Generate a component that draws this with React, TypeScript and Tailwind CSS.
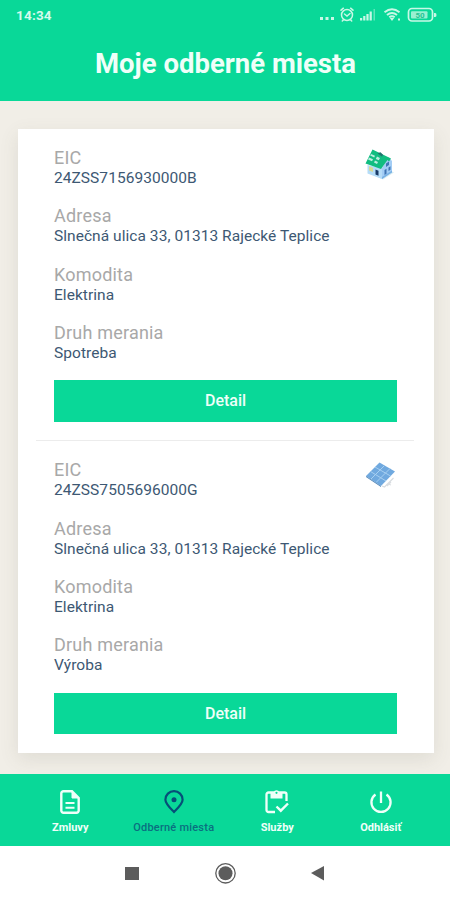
import React from 'react';

const GREEN = 'bg-[#09d898]';

function StatusIcons() {
  return (
    <svg width="120" height="18" viewBox="0 0 120 18" fill="none" className="text-[#c9f8e6]">
      <g fill="currentColor">
        <rect x="0" y="12" width="3" height="3" />
        <rect x="5.500" y="12" width="3" height="3" />
        <rect x="11" y="12" width="3" height="3" />
      </g>
      <g stroke="currentColor" strokeWidth="1.500" strokeLinecap="round">
        <circle cx="27" cy="10" r="5.500" />
        <path d="M21 5.200l2.400-2M33 5.200l-2.400-2M24.500 9l2.500 2 3-2.500M23.300 15l-1 1M30.700 15l1 1" />
      </g>
      <g fill="currentColor">
        <rect x="40" y="13" width="2.200" height="2.500" />
        <rect x="43.200" y="11" width="2.200" height="4.500" />
        <rect x="46.400" y="9" width="2.200" height="6.500" />
        <rect x="49.600" y="6.500" width="2.200" height="9" />
        <rect x="53.500" y="4" width="1.500" height="11.500" opacity=".45" />
      </g>
      <g stroke="currentColor" strokeWidth="2">
        <path d="M64.500 7.300c4.800-3.800 10.200-3.800 15 0M67 10c3.200-2.500 6.800-2.500 10 0M69.300 12.300c1.700-1.300 3.700-1.300 5.400 0" />
      </g>
      <path d="M69.800 13h4.400L72 16zM78 13.500h2v2h-2z" fill="currentColor" />
      <rect x="88.500" y="3.500" width="24" height="12.500" rx="3.500" stroke="currentColor" strokeWidth="1.700" />
      <rect x="91" y="6.200" width="16.500" height="7.200" rx="1" fill="currentColor" opacity=".75" />
      <path d="M114 8h1.200q1.300 0 1.300 2t-1.300 2H114z" fill="currentColor" />
      <text x="100" y="12.800" fontSize="8" fontWeight="700" textAnchor="middle" fill="#24c393">50</text>
    </svg>
  );
}

function HouseIcon() {
  return (
    <svg width="32" height="34" viewBox="0 0 32 34">
      <path d="M4 25l15 6.500 11-7-4-2z" fill="#d9edf2" />
      <path d="M3.500 17v8.500L18 31V20z" fill="#b5dcf8" />
      <path d="M18 20l6.500-11 3.500 4v11l-10 7z" fill="#a3cdf5" />
      <path d="M18 29v2l10-6.500v-2z" fill="#79b1e4" />
      <path d="M1.500 15.500L8.500 1.500l18.500 9-2 3-1.500-1.500L17 21z" fill="#11bd80" />
      <path d="M5 9.500l4 1.800-1 2-4-1.800zM11 12.500l3 1.400-1 2-3-1.400zM7 6l4 1.800-.8 1.600-4-1.800zM13 8.500l3 1.400-1.200 2.400-3-1.400z" fill="#bceee0" />
      <path d="M13.500 5.200l3-1 2.500 2.500-1 2z" fill="#21746e" />
      <path d="M5 18.200l4 1.600v4.200l-4-1.500z" fill="#d8da94" />
      <path d="M11.500 21.500l3 1.200v5l-3-1.200z" fill="#193966" />
      <path d="M22 15.500l3-2v3.500l-3 2zM20.500 22l2-1.300v5l-2 1.300zM24.500 19.500l2-1.300v3.500l-2 1.300z" fill="#3f74b3" />
    </svg>
  );
}

function SolarIcon() {
  return (
    <svg width="32" height="28" viewBox="0 0 32 28">
      <path d="M17 25l2.500 1 9-9M22 25l4-4m-3 2l3 1" stroke="#d9dde1" strokeWidth="1.200" fill="none" />
      <path d="M1 15L14.500 1.500 30 10.500 16 25z" fill="#70a9df" />
      <path d="M5.500 10.500L21 20M10 6l15.500 9M6 18L19.500 4.500M11 21.500L25 7.500" stroke="#a6cff1" strokeWidth="1" />
      <path d="M1 15v1l15 10v-1z" fill="#4c82b7" />
    </svg>
  );
}

function DocumentIcon() {
  return (
    <svg width="20" height="24" viewBox="0 0 20 24" fill="none" stroke="currentColor">
      <path d="M12 1.300H3.500A2.200 2.200 0 0 0 1.300 3.500v17a2.200 2.200 0 0 0 2.200 2.200h13a2.200 2.200 0 0 0 2.200-2.200V8z" strokeWidth="2.400" />
      <path d="M12 1v7h7z" fill="currentColor" strokeWidth="1" />
      <path d="M5.500 13h9M5.500 17.700h9" strokeWidth="2.100" />
    </svg>
  );
}

function PinIcon() {
  return (
    <svg width="20" height="24" viewBox="0 0 20 24" fill="none">
      <path d="M10 22C5 16.800 1.400 13.500 1.400 9.700a8.600 8.600 0 0 1 17.200 0C18.600 13.500 15 16.800 10 22z" stroke="currentColor" strokeWidth="2.200" />
      <circle cx="10" cy="9.700" r="2.500" fill="currentColor" />
    </svg>
  );
}

function ClipboardIcon() {
  return (
    <svg width="24" height="24" viewBox="0 0 24 24" fill="none" stroke="currentColor" className="overflow-visible">
      <path d="M10 22H3.500a2 2 0 0 1-2-2V4.500a2 2 0 0 1 2-2h16a2 2 0 0 1 2 2V11" strokeWidth="2.300" />
      <path d="M5.500 2.500h3.200a2.900 2.900 0 0 1 5.600 0h3.200v6h-12z" fill="currentColor" stroke="none" />
      <circle cx="11.500" cy="2.800" r="1.100" fill="#09d898" stroke="none" />
      <path d="M11.500 16.500l4.300 4.200 7.200-7.200" strokeWidth="2.400" />
    </svg>
  );
}

function PowerIcon() {
  return (
    <svg width="24" height="24" viewBox="0 0 24 24" fill="none" stroke="currentColor" strokeWidth="2.300">
      <path d="M12 1.500v11.500M6.500 4.500a9.600 9.600 0 1 0 11 0" />
    </svg>
  );
}

function Field({ label, value }: { label: string; value: string }) {
  return (
    <div className="h-[58.400px]">
      <div className="text-[18px] leading-[20px] tracking-[0.200px] text-[#a8a8a8]">{label}</div>
      <div className="whitespace-nowrap text-[15.500px] leading-[20px] tracking-[0.050px] text-[#3d5873]">{value}</div>
    </div>
  );
}

function SupplyPoint({ eic, kind, icon }: { eic: string; kind: string; icon: React.ReactNode }) {
  return (
    <section className="flex h-[312.400px] flex-col pt-[18.900px] pr-[37px] pl-[36px]">
      <div className="flex items-start justify-between">
        <Field label="EIC" value={eic} />
        {icon}
      </div>
      <Field label="Adresa" value="Slnečná ulica 33, 01313 Rajecké Teplice" />
      <Field label="Komodita" value="Elektrina" />
      <Field label="Druh merania" value={kind} />
      <button className={`-mt-[1.200px] h-[41.400px] w-full shrink-0 text-[16px] font-medium leading-[42px] text-[#effff9] ${GREEN}`}>Detail</button>
    </section>
  );
}

function NavItem({ icon, label, active = false }: { icon: React.ReactNode; label: string; active?: boolean }) {
  return (
    <div className={`flex w-[103.500px] flex-col items-center ${active ? 'text-[#064f78]' : 'text-[#effff9]'}`}>
      <div className="flex h-6 items-center">{icon}</div>
      <div className={`mt-[7px] whitespace-nowrap text-[11px] leading-[14px] ${active ? 'font-medium tracking-[0.220px] text-[#0b6f80]' : 'font-bold'}`}>{label}</div>
    </div>
  );
}

export default function App() {
  return (
    <div className="flex h-[900px] w-[450px] flex-col overflow-hidden bg-white font-['Roboto','Noto_Sans',sans-serif]">
      <header className={`h-[101px] shrink-0 ${GREEN}`}>
        <div className="flex h-[30px] justify-between pt-[5px] pr-[10px] pl-[16px]">
          <span className="text-[13.500px] font-bold leading-[20px] tracking-[0.200px] text-[#d5fbec]">14:34</span>
          <StatusIcons />
        </div>
        <h1 className="mt-[16px] pl-px text-center text-[27.500px] font-bold leading-[36px] text-[#effff9]">Moje odberné miesta</h1>
      </header>

      <main className="h-[673px] shrink-0 bg-[#f1eee7] pt-[28px] pl-[18px]">
        <div className="h-[624px] w-[416px] bg-white shadow-[0_6px_18px_rgba(90,90,70,0.120)]">
          <SupplyPoint eic="24ZSS7156930000B" kind="Spotreba" icon={<div className="pr-px"><HouseIcon /></div>} />
          <div className="ml-[18px] -mt-[1.400px] h-[1.400px] w-[378px] bg-[#ececec]" />
          <SupplyPoint eic="24ZSS7505696000G" kind="Výroba" icon={<div className="pt-px"><SolarIcon /></div>} />
        </div>
      </main>

      <nav className={`flex h-[72px] shrink-0 justify-center pt-[16px] pl-px ${GREEN}`}>
        <NavItem icon={<DocumentIcon />} label="Zmluvy" />
        <NavItem icon={<PinIcon />} label="Odberné miesta" active />
        <NavItem icon={<ClipboardIcon />} label="Služby" />
        <NavItem icon={<PowerIcon />} label="Odhlásiť" />
      </nav>

      <footer className="flex h-[54px] shrink-0 items-center justify-between pr-[125px] pl-[125px]">
        <div className="h-[13px] w-[14px] bg-[#5c5c5c]" />
        <svg width="22" height="22" viewBox="0 0 22 22">
          <circle cx="11.500" cy="11.300" r="9.700" fill="none" stroke="#5c5c5c" strokeWidth="1.300" />
          <circle cx="11.500" cy="11.300" r="7" fill="#5c5c5c" />
        </svg>
        <svg width="14" height="16" viewBox="0 0 14 16">
          <path d="M0 8L13 1v14.500z" fill="#5c5c5c" />
        </svg>
      </footer>
    </div>
  );
}
